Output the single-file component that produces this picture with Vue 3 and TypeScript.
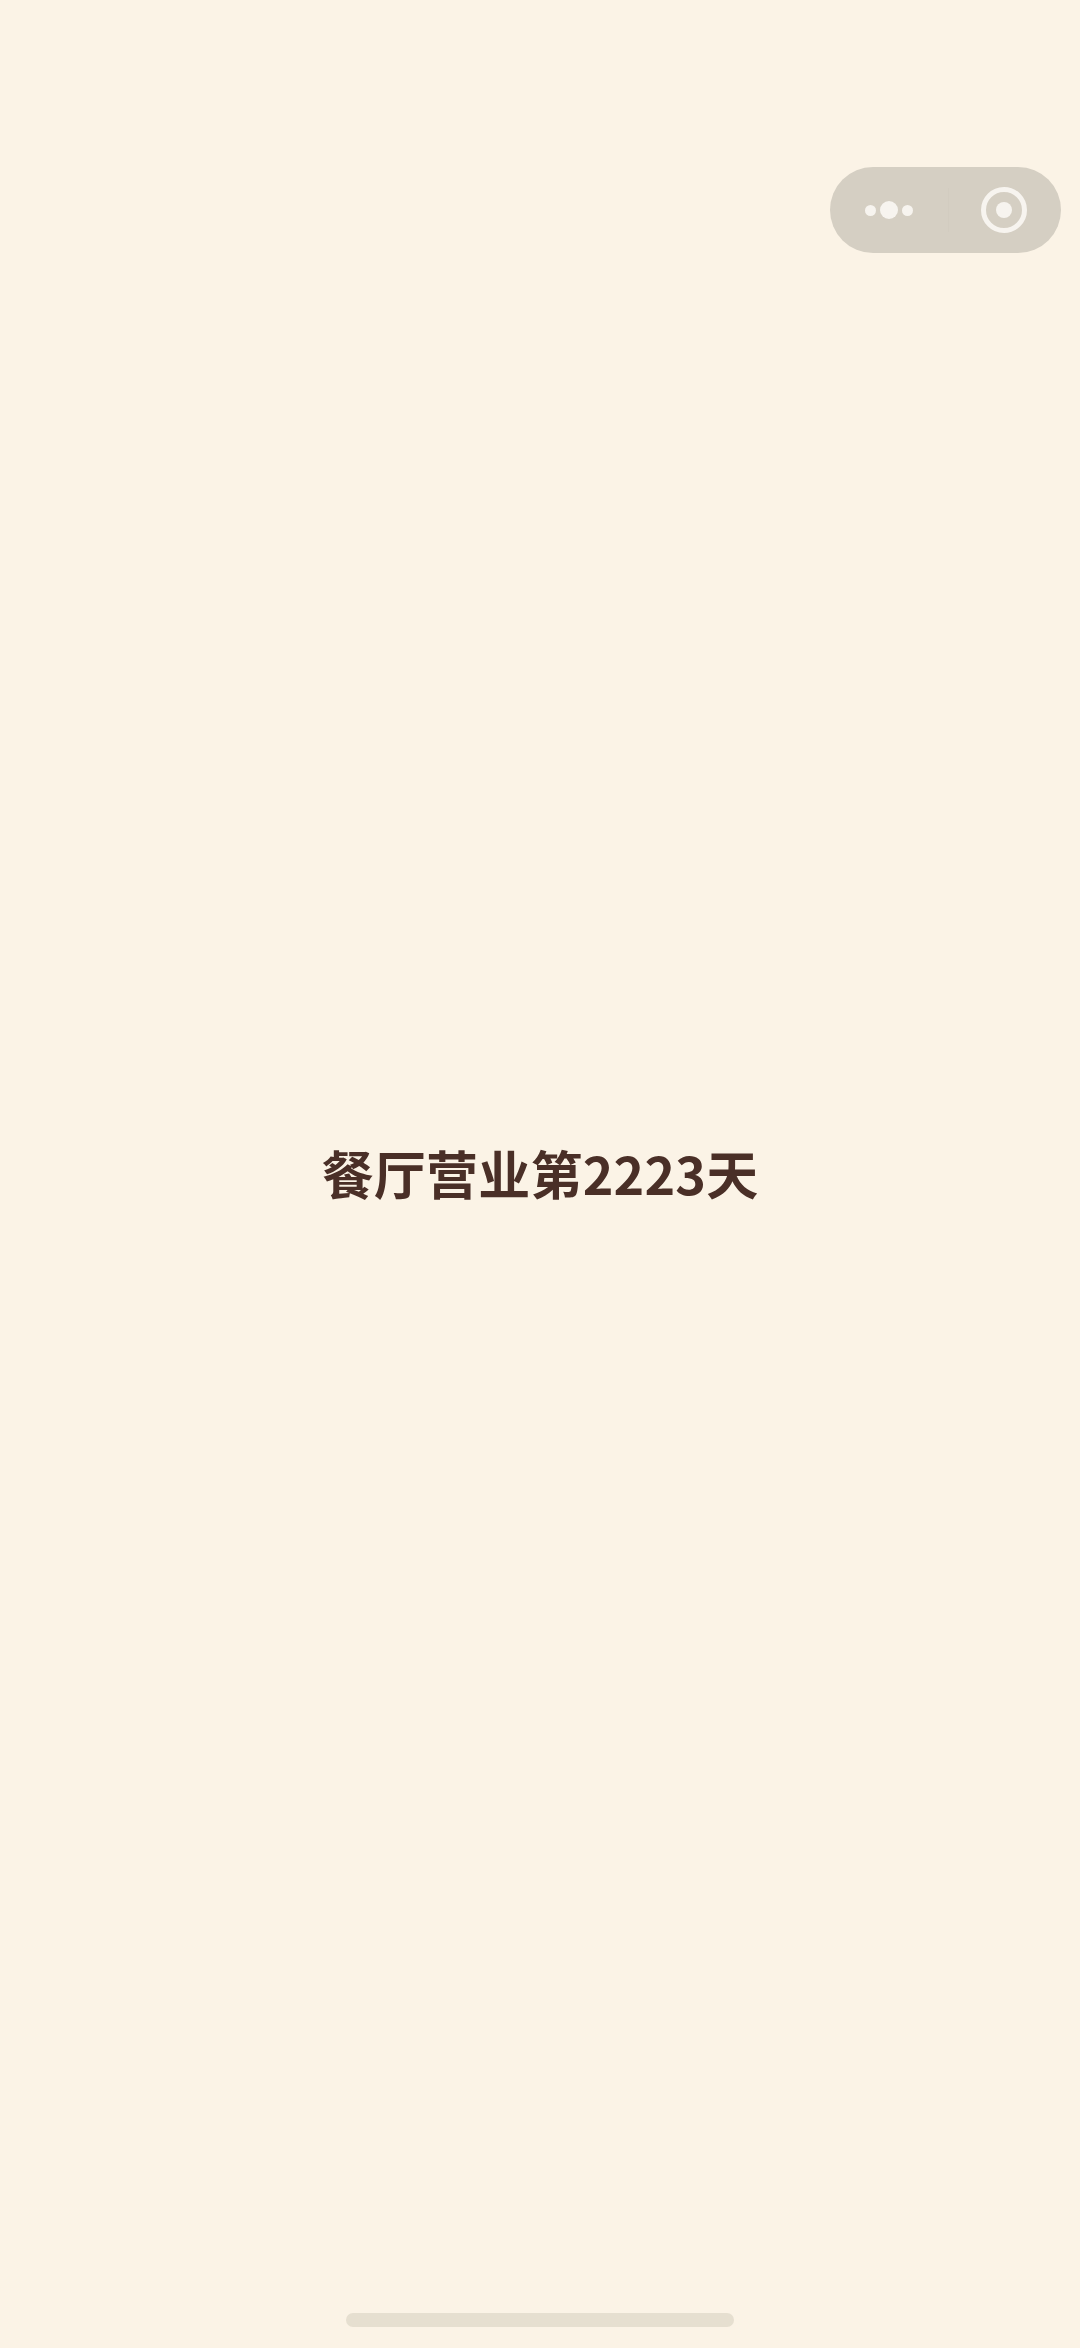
<script setup lang="ts">
const title: string = '餐厅营业第2223天'
</script>

<template>
  <div class="page">
    <div class="capsule">
      <div class="more">
        <span class="dot small"></span>
        <span class="dot big"></span>
        <span class="dot small"></span>
      </div>
      <span class="divider"></span>
      <div class="close">
        <span class="ring"><span class="core"></span></span>
      </div>
    </div>
    <h1 class="title">{{ title }}</h1>
    <div class="home-bar"></div>
  </div>
</template>

<style scoped>
.page {
  position: relative;
  width: 1080px;
  height: 2348px;
  background: #fbf3e6;
  display: flex;
  align-items: center;
  justify-content: center;
  overflow: hidden;
}
.title {
  margin: 0 0 2px;
  font-family: "Noto Sans CJK SC", "Noto Sans", sans-serif;
  font-size: 52px;
  letter-spacing: 0.2px;
  font-weight: 700;
  color: #4a2f27;
  line-height: 1.2;
  white-space: nowrap;
}
.capsule {
  position: absolute;
  left: 830px;
  top: 167px;
  width: 231px;
  height: 86px;
  border-radius: 43px;
  background: #d5cfc3;
  display: flex;
  align-items: center;
}
.more {
  width: 118px;
  display: flex;
  align-items: center;
  justify-content: center;
  gap: 4px;
}
.dot {
  border-radius: 50%;
  background: #f7f4ef;
}
.small {
  width: 11px;
  height: 11px;
}
.big {
  width: 18px;
  height: 18px;
}
.divider {
  width: 1px;
  height: 44px;
  background: #d2ccc0;
}
.close {
  flex: 1;
  display: flex;
  align-items: center;
  justify-content: center;
  padding-right: 3px;
}
.ring {
  box-sizing: border-box;
  width: 46px;
  height: 46px;
  border: 5px solid #f7f4ef;
  border-radius: 50%;
  display: flex;
  align-items: center;
  justify-content: center;
}
.core {
  width: 16px;
  height: 16px;
  border-radius: 50%;
  background: #f7f4ef;
}
.home-bar {
  position: absolute;
  left: 346px;
  top: 2313px;
  width: 388px;
  height: 14px;
  border-radius: 7px;
  background: #e6dfd0;
}
</style>
